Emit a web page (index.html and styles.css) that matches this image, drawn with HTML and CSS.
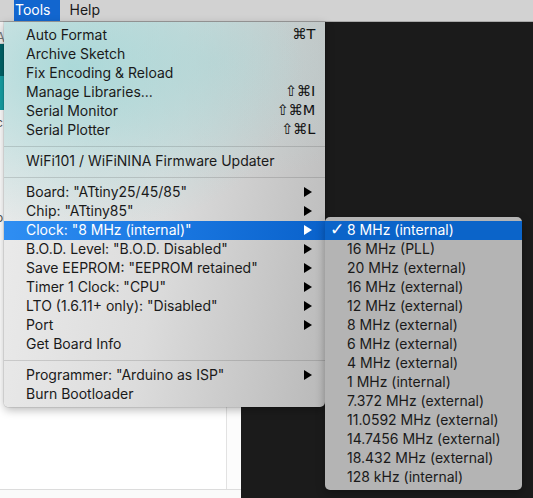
FILE: index.html
```html
<!DOCTYPE html>
<html>
<head>
<meta charset="utf-8">
<link rel="stylesheet" href="styles.css">
</head>
<body>
<div class="app">
  <div class="menubar">
    <span class="mb-item active">Tools</span>
    <span class="mb-item">Help</span>
  </div>
  <div class="workspace">
    <div class="sidepane">
      <div class="sp-top"><span class="sp-letter">A</span></div>
      <div class="sp-toolbar"></div>
      <div class="sp-tabs"></div>
      <div class="sp-body">
        <div class="sp-main">
          <span class="sp-char c1">c</span>
          <span class="sp-char c2">o</span>
        </div>
        <div class="sp-gutter"></div>
      </div>
      <div class="sp-foot"></div>
    </div>
    <div class="editor"></div>
  </div>

  <div class="menu">
    <div class="item"><span>Auto Format</span><span class="key">⌘T</span></div>
    <div class="item"><span>Archive Sketch</span></div>
    <div class="item"><span>Fix Encoding &amp; Reload</span></div>
    <div class="item"><span>Manage Libraries...</span><span class="key">⇧⌘I</span></div>
    <div class="item"><span>Serial Monitor</span><span class="key">⇧⌘M</span></div>
    <div class="item"><span>Serial Plotter</span><span class="key">⇧⌘L</span></div>
    <div class="sep"></div>
    <div class="item"><span>WiFi101 / WiFiNINA Firmware Updater</span></div>
    <div class="sep"></div>
    <div class="item"><span>Board: "ATtiny25/45/85"</span><span class="arrow"></span></div>
    <div class="item"><span>Chip: "ATtiny85"</span><span class="arrow"></span></div>
    <div class="item selected"><span>Clock: "8 MHz (internal)"</span><span class="arrow"></span></div>
    <div class="item"><span>B.O.D. Level: "B.O.D. Disabled"</span><span class="arrow"></span></div>
    <div class="item"><span>Save EEPROM: "EEPROM retained"</span><span class="arrow"></span></div>
    <div class="item"><span>Timer 1 Clock: "CPU"</span><span class="arrow"></span></div>
    <div class="item"><span>LTO (1.6.11+ only): "Disabled"</span><span class="arrow"></span></div>
    <div class="item"><span>Port</span><span class="arrow"></span></div>
    <div class="item"><span>Get Board Info</span></div>
    <div class="sep"></div>
    <div class="item"><span>Programmer: "Arduino as ISP"</span><span class="arrow"></span></div>
    <div class="item"><span>Burn Bootloader</span></div>
  </div>

  <div class="submenu">
    <div class="sitem selected"><span class="check">✓</span>8 MHz (internal)</div>
    <div class="sitem">16 MHz (PLL)</div>
    <div class="sitem">20 MHz (external)</div>
    <div class="sitem">16 MHz (external)</div>
    <div class="sitem">12 MHz (external)</div>
    <div class="sitem">8 MHz (external)</div>
    <div class="sitem">6 MHz (external)</div>
    <div class="sitem">4 MHz (external)</div>
    <div class="sitem">1 MHz (internal)</div>
    <div class="sitem">7.372 MHz (external)</div>
    <div class="sitem">11.0592 MHz (external)</div>
    <div class="sitem">14.7456 MHz (external)</div>
    <div class="sitem">18.432 MHz (external)</div>
    <div class="sitem">128 kHz (internal)</div>
  </div>
</div>
</body>
</html>
```

FILE: styles.css
```css
* { box-sizing: border-box; }
html, body {
  margin: 0;
  padding: 0;
  width: 533px;
  height: 498px;
  overflow: hidden;
  font-family: Inter, "Liberation Sans", Arial, sans-serif;
  font-size: 14px;
  color: #1a1a1a;
}
.app {
  position: relative;
  width: 533px;
  height: 498px;
  display: flex;
  flex-direction: column;
}
.menubar {
  height: 22px;
  flex: none;
  background: #d2d2d2;
  border-bottom: 1px solid #a9a9a9;
  display: flex;
  align-items: stretch;
  padding-left: 14px;
}
.mb-item {
  line-height: 20px;
  padding: 0 9px 1px 1px;
  color: #1a1a1a;
}
.mb-item.active {
  background: #1266cf;
  color: #fff;
}
.mb-item + .mb-item { padding-left: 10px; }
.workspace {
  flex: 1;
  display: flex;
}
.sidepane {
  width: 241px;
  flex: none;
  display: flex;
  flex-direction: column;
  background: #fff;
}
.sp-top {
  height: 22px;
  background: #f2f2f2;
  border-bottom: 1px solid #d8d8d8;
  position: relative;
  overflow: hidden;
}
.sp-letter {
  position: absolute;
  left: -4px;
  top: 7px;
  color: #777;
  font-size: 13px;
}
.sp-toolbar { height: 32px; background: #006468; }
.sp-tabs { height: 34px; background: #17a1a5; }
.sp-body {
  flex: 1;
  display: flex;
}
.sp-main {
  width: 227px;
  border-right: 1px solid #e2e2e2;
  position: relative;
}
.sp-char {
  position: absolute;
  left: -4px;
  color: #555;
  font-size: 12px;
}
.sp-char.c1 { top: 5px; }
.sp-char.c2 { top: 100px; }
.sp-gutter { flex: 1; background: #fcfcfc; }
.sp-foot {
  height: 9px;
  border-top: 1px solid #dcdcdc;
  background: #fafafa;
}
.editor {
  flex: 1;
  background: #1b1b1b;
}

/* Main dropdown menu */
.menu {
  position: absolute;
  left: 4px;
  top: 22px;
  width: 321px;
  height: 385px;
  padding: 4px 0 3px;
  border-radius: 0 0 5px 5px;
  background:
    radial-gradient(ellipse 230px 170px at 70px 45px, rgba(168, 216, 216, 0.95), rgba(176, 216, 216, 0) 100%),
    radial-gradient(ellipse 200px 120px at 210px 40px, rgba(180, 210, 210, 0.6), rgba(180, 210, 210, 0) 100%),
    linear-gradient(100deg, #ededed 0%, #dcdcdc 50%, #b9b9b9 100%);
  box-shadow: 0 3px 10px rgba(0, 0, 0, 0.28), 0 0 0 1px rgba(0, 0, 0, 0.08);
}
.item {
  height: 19px;
  line-height: 17px;
  padding: 0 10px 2px 22px;
  display: flex;
  justify-content: space-between;
  align-items: center;
  white-space: nowrap;
  color: #1a1a1a;
}
.key {
  font-family: "DejaVu Sans", sans-serif;
  font-size: 14.5px;
  letter-spacing: -0.3px;
  color: #111;
}
.arrow {
  width: 0;
  height: 0;
  margin-right: 3px;
  border-left: 8px solid #000;
  border-top: 5px solid transparent;
  border-bottom: 5px solid transparent;
}
.item.selected {
  background: linear-gradient(to right, #2f8ef2 0%, #1a78e2 50%, #0a62cb 100%);
  color: #fff;
}
.item.selected .arrow { border-left-color: #fff; }
.sep {
  height: 12px;
  display: flex;
  align-items: center;
}
.sep::before {
  content: "";
  display: block;
  width: 100%;
  height: 1px;
  background: rgba(0, 0, 0, 0.13);
}

/* Submenu */
.submenu {
  position: absolute;
  left: 325px;
  top: 217px;
  width: 197px;
  height: 273px;
  padding: 4px 0;
  border-radius: 5px;
  background: #b4b4b4;
  box-shadow: 0 3px 10px rgba(0, 0, 0, 0.3);
}
.sitem {
  height: 19px;
  line-height: 17px;
  padding: 0 0 2px 22px;
  position: relative;
  white-space: nowrap;
  color: #1a1a1a;
}
.sitem.selected {
  background: #0b64c9;
  color: #fff;
}
.check {
  position: absolute;
  left: 5px;
  top: 0;
  font-family: "DejaVu Sans", sans-serif;
  font-size: 17px;
  font-weight: bold;
}
```
